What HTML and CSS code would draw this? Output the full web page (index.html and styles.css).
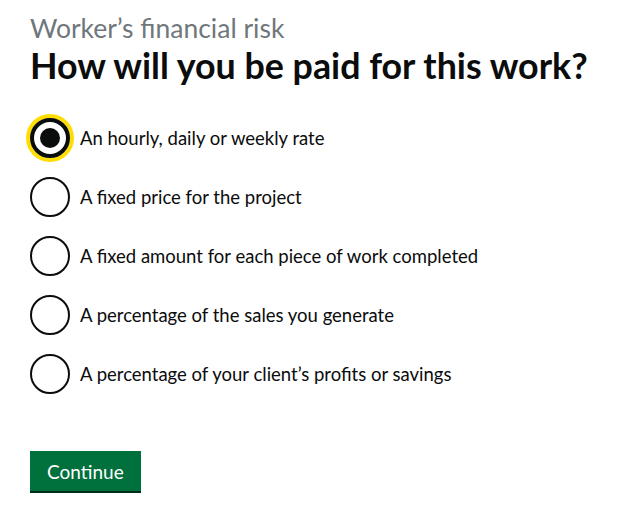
FILE: index.html
```html
<!DOCTYPE html>
<html lang="en">
<head>
    <meta charset="UTF-8">
    <title>How will you be paid for this work?</title>
    <link rel="stylesheet" href="styles.css">
</head>
<body>
    <main class="container">
        <form>
            <fieldset class="fieldset">
                <legend class="legend">
                    <span class="caption">Worker’s financial risk</span>
                    <h1 class="heading">How will you be paid for this work?</h1>
                </legend>
                <div class="radios">
                    <label class="radio">
                        <input type="radio" name="paid" value="rate" checked>
                        <span class="circle focused"></span>
                        <span class="label-text">An hourly, daily or weekly rate</span>
                    </label>
                    <label class="radio">
                        <input type="radio" name="paid" value="fixed">
                        <span class="circle"></span>
                        <span class="label-text">A fixed price for the project</span>
                    </label>
                    <label class="radio">
                        <input type="radio" name="paid" value="piece">
                        <span class="circle"></span>
                        <span class="label-text">A fixed amount for each piece of work completed</span>
                    </label>
                    <label class="radio">
                        <input type="radio" name="paid" value="sales">
                        <span class="circle"></span>
                        <span class="label-text">A percentage of the sales you generate</span>
                    </label>
                    <label class="radio">
                        <input type="radio" name="paid" value="profits">
                        <span class="circle"></span>
                        <span class="label-text">A percentage of your client’s profits or savings</span>
                    </label>
                </div>
            </fieldset>
            <button type="submit" class="button">Continue</button>
        </form>
    </main>
</body>
</html>
```

FILE: styles.css
```css
body {
    margin: 0;
    font-family: Lato, Arial, sans-serif;
    color: #0b0c0c;
    background: #fff;
}
.container {
    padding: 10px 30px;
}
.fieldset {
    border: none;
    margin: 0;
    padding: 0;
}
.legend {
    padding: 0;
}
.caption {
    display: block;
    font-size: 26.5px;
    line-height: 36px;
    color: #6f777b;
}
.heading {
    margin: 0 0 32px;
    font-size: 35.8px;
    line-height: 40px;
    font-weight: 700;
}
.radios {
    display: flex;
    flex-direction: column;
    gap: 19px;
}
.radio {
    display: flex;
    align-items: center;
    gap: 10px;
    cursor: pointer;
}
.radio input {
    display: none;
}
.circle {
    position: relative;
    width: 40px;
    height: 40px;
    box-sizing: border-box;
    border: 2px solid #0b0c0c;
    border-radius: 50%;
    flex-shrink: 0;
}
.radio input:checked + .circle::after {
    content: "";
    position: absolute;
    left: 6px;
    top: 6px;
    width: 20px;
    height: 20px;
    border-radius: 50%;
    background: #0b0c0c;
}
.circle.focused {
    border-width: 4px;
    box-shadow: 0 0 0 4px #ffdd00;
}
.label-text {
    font-size: 18.5px;
    line-height: 25px;
}
.button {
    margin-top: 57px;
    padding: 8px 17px 7px;
    font-family: inherit;
    font-size: 19px;
    line-height: 25px;
    color: #fff;
    background: #00703c;
    border: none;
    border-radius: 0;
    box-shadow: 0 2px 0 #002d18;
    cursor: pointer;
}
```
